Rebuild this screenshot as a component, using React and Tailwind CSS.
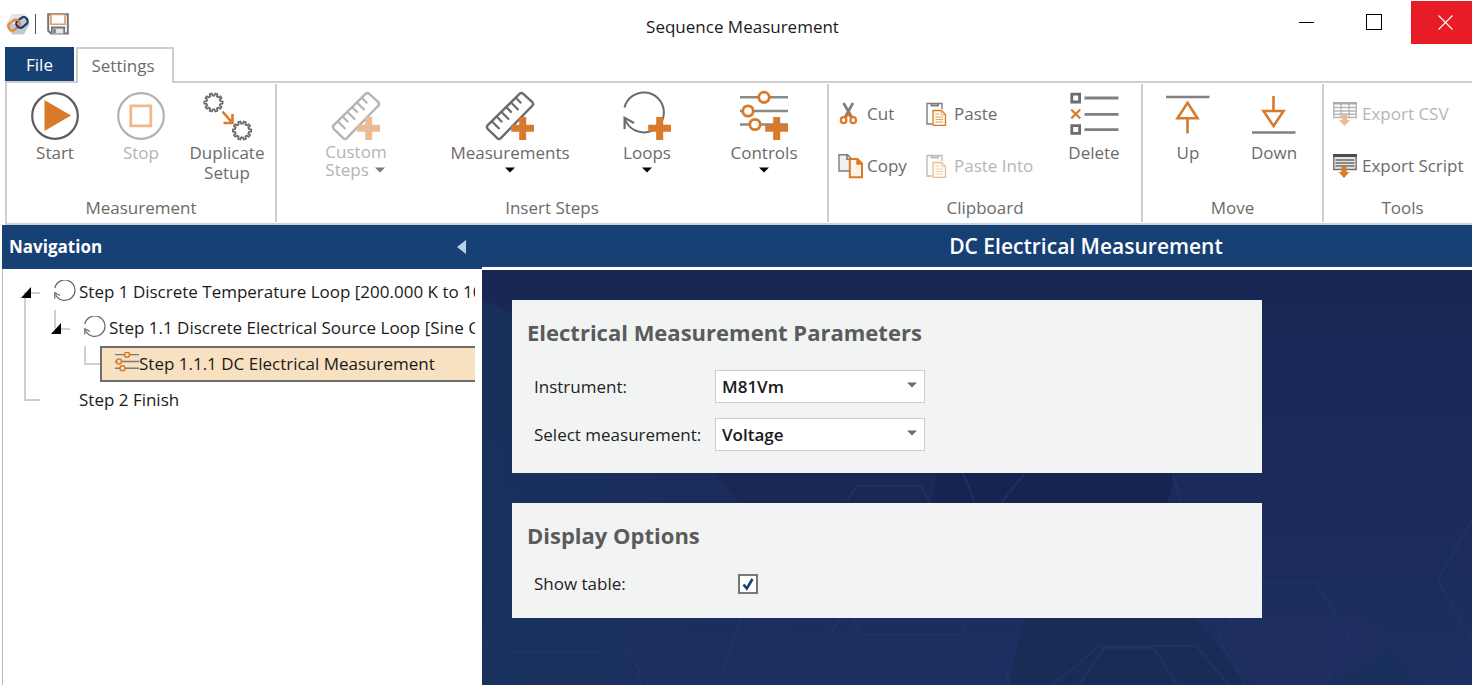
import { useState } from 'react';
import clsx from 'clsx';

const GRAY = '#6b6b6b';
const ORANGE = '#d97a2b';

function gearPath(cx, cy) {
  const teeth = 10;
  const points = [];
  for (let i = 0; i < teeth; i++) {
    [[-0.3, 7], [-0.2, 9.2], [0.2, 9.2], [0.3, 7]].forEach(([shift, r]) => {
      const a = ((i + shift) / teeth) * Math.PI * 2;
      points.push(`${(cx + r * Math.cos(a)).toFixed(1)} ${(cy + r * Math.sin(a)).toFixed(1)}`);
    });
  }
  return `M${points.join('L')}Z`;
}

function BigIcon({ children }) {
  return (
    <svg viewBox="0 0 48 48" fill="none" className="w-12 h-12 overflow-visible" aria-hidden="true">
      {children}
    </svg>
  );
}

function SmallIcon({ children }) {
  return (
    <svg viewBox="0 0 24 24" fill="none" className="w-6 h-6 shrink-0 overflow-visible" aria-hidden="true">
      {children}
    </svg>
  );
}

const Plus = () => <path d="M33.2 25h7v7.8H48v7h-7.8V48h-7v-8.2h-8v-7h8z" fill={ORANGE} />;

const StartIcon = () => (
  <BigIcon>
    <circle cx="24" cy="24" r="22.8" stroke="#5c5c5c" strokeWidth="2.2" />
    <path d="M13.5 8L40 23.5L13.5 39z" fill={ORANGE} />
  </BigIcon>
);

const StopIcon = () => (
  <BigIcon>
    <circle cx="24" cy="24" r="22.8" stroke="#b2b2b2" strokeWidth="2.2" />
    <path d="M13.8 13.8h20v20h-20z" stroke="#f0b98a" strokeWidth="2.8" />
  </BigIcon>
);

const DuplicateIcon = () => (
  <BigIcon>
    <path d={gearPath(10.5, 10.5)} stroke={GRAY} strokeWidth="1.8" strokeLinejoin="round" />
    <path d={gearPath(39, 38.5)} stroke={GRAY} strokeWidth="1.8" strokeLinejoin="round" />
    <path d="M19.5 19.5L29 30.5M29.5 22v9h-9" stroke={ORANGE} strokeWidth="2.6" />
  </BigIcon>
);

const RulerIcon = () => (
  <BigIcon>
    <path d="M33.5 1.8Q35.5 0 37.3 1.8L46.3 10.2Q48 12 46.3 13.8L14.8 46.2Q13 48 11.2 46.2L1.8 37Q0 35 1.8 33.2z" fill="#fff" stroke={GRAY} strokeWidth="2.4" />
    <path d="M6 29.5l7.5 7.5M10.8 24.8l5.4 5.4M15.5 20l7.5 7.5M20.3 15.2l5.4 5.4M25 10.5l7.5 7.5M29.8 5.8l5.4 5.4" stroke={GRAY} strokeWidth="2.2" />
    <Plus />
  </BigIcon>
);

const LoopIcon = () => (
  <BigIcon>
    <path d="M1.5 15.5A20 20 0 1 1 26 39.8A20.3 20.3 0 0 1 2 27.5" stroke={GRAY} strokeWidth="2" />
    <path d="M1.6 37V25.8L11 31" stroke={GRAY} strokeWidth="2.2" />
    <Plus />
  </BigIcon>
);

function Sliders() {
  return (
    <>
      <path d="M0 5.3h48M0 19h48M0 32.5h48" stroke="#8a8a8a" strokeWidth="2.6" />
      <g fill="#fff" stroke={ORANGE} strokeWidth="2.8">
        <circle cx="24" cy="5.3" r="5.2" />
        <circle cx="8" cy="19" r="5.2" />
        <circle cx="15" cy="32.5" r="5.2" />
      </g>
    </>
  );
}

const ControlsIcon = () => (
  <BigIcon>
    <Sliders />
    <Plus />
  </BigIcon>
);

const DeleteIcon = () => (
  <BigIcon>
    <path d="M1.8 2.2h7.8v7.8H1.8zM1.8 33.6h7.8v7.8H1.8z" stroke={GRAY} strokeWidth="2.8" />
    <path d="M1.2 17.5l9 9M10.2 17.5l-9 9" stroke={ORANGE} strokeWidth="2.2" />
    <path d="M14.5 6H48.5M14.5 22.4H48.5M14.5 37.7H48.5" stroke="#808080" strokeWidth="2.8" />
  </BigIcon>
);

const UpIcon = () => (
  <BigIcon>
    <path d="M2 5h43.5" stroke="#808080" strokeWidth="2.6" />
    <path d="M23.5 26.5V41.5M23.5 10.8L33.5 26.3H13.5z" stroke={ORANGE} strokeWidth="2.6" />
  </BigIcon>
);

const DownIcon = () => (
  <BigIcon>
    <path d="M2 40.5h43.5" stroke="#808080" strokeWidth="2.6" />
    <path d="M23.5 4V19M23.5 34L33.5 19H13.5z" stroke={ORANGE} strokeWidth="2.6" />
  </BigIcon>
);

const CutIcon = () => (
  <SmallIcon>
    <path d="M5.5 1L14 15.5M15 1L6.8 15.5" stroke="#7c7c7c" strokeWidth="2.6" />
    <g stroke={ORANGE} strokeWidth="2.2">
      <ellipse cx="5.6" cy="18.2" rx="2.8" ry="3" />
      <ellipse cx="15.2" cy="18.2" rx="2.8" ry="3" />
      <path d="M7.5 15.8L10.4 12.5L13.3 15.8" />
    </g>
  </SmallIcon>
);

const CopyIcon = () => (
  <SmallIcon>
    <path d="M1 .8h8.5l4 4V17H1z" fill="#f0f0f0" stroke="#7c7c7c" strokeWidth="1.4" />
    <path d="M9 .8v4.4h4.4" stroke="#7c7c7c" strokeWidth="1.6" />
    <path d="M11.8 5h7.7l4.5 4.5v13.7H11.8z" fill="#fdf3e6" stroke={ORANGE} strokeWidth="2" />
    <path d="M19 5v5h5" fill={ORANGE} stroke={ORANGE} strokeWidth="1.4" />
  </SmallIcon>
);

const PasteIcon = () => (
  <SmallIcon>
    <path d="M7 22H2V1.5h15V7" stroke="#7c7c7c" strokeWidth="1.4" />
    <path d="M6.5 1v2.5h6.5V1" stroke="#7c7c7c" strokeWidth="1.8" />
    <path d="M8 8.5h8.5l4 4v10.8H8z" fill="#fff8ee" stroke={ORANGE} strokeWidth="1.3" />
    <path d="M16.3 8.5v4.2h4M10.5 12h3.5M10.5 15h7.5M10.5 17.5h7.5M10.5 20h7.5" stroke="#e9a45c" strokeWidth="1" />
  </SmallIcon>
);

const ExportCsvIcon = () => (
  <SmallIcon>
    <path d="M.8 1h22.4v14.5H.8zM.8 5.5h22.4M.8 9h22.4M.8 12.3h22.4M8 1v14.5M16 1v14.5" stroke="#707070" strokeWidth="1.4" />
    <path d="M0 1.3h24" stroke="#555" strokeWidth="2.4" />
    <path d="M9 11h5v7h3l-5.5 6L6 18h3z" fill={ORANGE} />
  </SmallIcon>
);

const ExportScriptIcon = () => (
  <SmallIcon>
    <path d="M.8 1.5h22.4v14H.8z" fill="#e4e4e4" stroke="#707070" strokeWidth="1.4" />
    <path d="M0 1.5h24" stroke="#4d4d4d" strokeWidth="3" />
    <path d="M2.5 6h19M2.5 9h19M2.5 12h19" stroke="#6b6b6b" strokeWidth="1.4" />
    <path d="M8.5 12h5v6h3L11 24l-5.5-6h3z" fill={ORANGE} />
  </SmallIcon>
);

function Caret({ className }) {
  return (
    <svg viewBox="0 0 10 6" className={clsx('w-2.5 h-1.5 inline-block', className)} fill="currentColor" aria-hidden="true">
      <path d="M0 .5h10L5 5.5z" />
    </svg>
  );
}

function BigButton({ icon: Icon, label, width, disabled, menu }) {
  return (
    <button type="button" disabled={disabled} className={clsx('flex flex-col items-center pt-2', width)}>
      <span className={clsx(disabled && label !== 'Stop' && 'opacity-50')}>
        <Icon />
      </span>
      <span
        className={clsx(
          'mt-[3px] whitespace-pre-line',
          disabled ? 'text-[#b4b4b4] text-left' : 'text-center',
          menu === 'inline' ? 'leading-[18px]' : 'leading-5'
        )}
      >
        {label}
        {menu === 'inline' && <Caret className="ml-1.5 mb-0.5 text-[#777]" />}
      </span>
      {menu === 'below' && <Caret className="mt-1 text-black" />}
    </button>
  );
}

function SmallButton({ icon: Icon, label, disabled }) {
  return (
    <button
      type="button"
      disabled={disabled}
      className={clsx('flex items-center gap-[5px] h-[52px] text-left whitespace-nowrap', disabled && 'opacity-50')}
    >
      <Icon />
      {label}
    </button>
  );
}

function Group({ title, className, inner, children }) {
  return (
    <section className={clsx('flex flex-col mt-px mb-px border-[#cfcfcf]', className)}>
      <div className={clsx('flex flex-1', inner)}>{children}</div>
      <h2 className="text-center leading-7">{title}</h2>
    </section>
  );
}

function TitleBar() {
  return (
    <header className="flex items-start h-[47px]">
      <div className="flex items-center pl-1.5 pt-3 w-[214px]">
        <svg viewBox="0 0 24 24" className="w-6 h-6" fill="none" aria-hidden="true">
          <path d="M6 2.5h12L23.5 12L18 22.5H6L.5 12z" fill="#c4c7cb" />
          <path d="M6 2.5h12L12 12L.5 12z" fill="#e3e4e6" />
          <rect x="2" y="9.2" width="12" height="8" rx="3.4" transform="rotate(-38 8 13.2)" stroke="#de8a35" strokeWidth="2.2" />
          <rect x="10" y="6.4" width="12" height="8" rx="3.6" transform="rotate(-38 16 10.4)" stroke="#1d3a73" strokeWidth="2.2" />
          <path d="M9 8.2q3-1.2 4.6 1.6" stroke="#de8a35" strokeWidth="2.2" />
        </svg>
        <span className="w-px h-5 ml-[5px] bg-[#555]" />
        <button type="button" aria-label="Save" className="ml-[11px]">
          <svg viewBox="0 0 22 22" className="w-[22px] h-[22px]" fill="none" aria-hidden="true">
            <path d="M1.2 1.2h19.6v19.3H4.2L1.2 17.8z" fill="#fff" stroke="#747474" strokeWidth="2" />
            <path d="M4 1.5v9.7h14V1.5z" fill="#fff" stroke="#dc9a62" strokeWidth="1.6" />
            <path d="M4.8 20.5v-6h12.4v6" fill="#e6e6e6" stroke="#747474" strokeWidth="1.8" />
            <path d="M7.5 16v4" stroke="#747474" strokeWidth="2.4" />
          </svg>
        </button>
      </div>
      <h1 className="flex-1 text-center text-[#1a1a1a] leading-[54px]">Sequence Measurement</h1>
      <div className="flex h-11">
        <button type="button" aria-label="Minimize" className="w-[70px] flex items-center justify-center">
          <span className="w-[15px] h-px bg-black" />
        </button>
        <button type="button" aria-label="Maximize" className="w-[70px] pr-1 flex items-center justify-center">
          <span className="w-4 h-4 border border-black" />
        </button>
        <button type="button" aria-label="Close" className="w-[61px] mt-px bg-[#e81c27] flex items-center justify-center pl-2">
          <svg viewBox="0 0 15 15" className="w-[15px] h-[15px]" stroke="#fff" strokeWidth="1.1" aria-hidden="true">
            <path d="M.5 .5l14 14M14.5 .5l-14 14" />
          </svg>
        </button>
      </div>
    </header>
  );
}

function Ribbon() {
  return (
    <div className="pl-[5px]">
      <div className="flex h-[34px] gap-0.5">
        <button type="button" className="w-[69px] pt-0.5 bg-[#174175] text-white">File</button>
        <button type="button" className="w-[98px] h-9 pr-1 relative bg-white border-2 border-b-0 border-[#cfcfcf]">Settings</button>
      </div>
      <div className="flex h-36 border-t-2 border-l-2 border-b-2 border-[#cfcfcf] border-b-[#c5d3e2]">
        <Group title="Measurement" className="border-r-2" inner="pl-[5px] pr-[5px]">
          <BigButton icon={StartIcon} label="Start" width="w-[86px]" />
          <BigButton icon={StopIcon} label="Stop" width="w-[86px]" disabled />
          <BigButton icon={DuplicateIcon} label={'Duplicate\nSetup'} width="w-[86px]" />
        </Group>
        <Group title="Insert Steps" className="border-r-2" inner="pl-px pr-[7px]">
          <BigButton icon={RulerIcon} label={'Custom\nSteps'} width="w-[156px]" menu="inline" disabled />
          <BigButton icon={RulerIcon} label="Measurements" width="w-[152px]" menu="below" />
          <BigButton icon={LoopIcon} label="Loops" width="w-[122px]" menu="below" />
          <BigButton icon={ControlsIcon} label="Controls" width="w-[112px]" menu="below" />
        </Group>
        <Group title="Clipboard" className="border-r-2" inner="pl-[9px] pr-1">
          <div className="grid grid-cols-[87px_126px] content-start pt-1">
            <SmallButton icon={CutIcon} label="Cut" />
            <SmallButton icon={PasteIcon} label="Paste" />
            <SmallButton icon={CopyIcon} label="Copy" />
            <SmallButton icon={PasteIcon} label="Paste Into" disabled />
          </div>
          <BigButton icon={DeleteIcon} label="Delete" width="w-[86px]" />
        </Group>
        <Group title="Move" className="border-r-2" inner="pl-0.5 pr-[5px]">
          <BigButton icon={UpIcon} label="Up" width="w-[86px]" />
          <BigButton icon={DownIcon} label="Down" width="w-[86px]" />
        </Group>
        <Group title="Tools" className="flex-1 pl-[9px]">
          <div className="flex flex-col pt-1">
            <SmallButton icon={ExportCsvIcon} label="Export CSV" disabled />
            <SmallButton icon={ExportScriptIcon} label="Export Script" />
          </div>
        </Group>
      </div>
    </div>
  );
}

const connectors = {
  open: { line: 'M1 18V36M1 19h15', arrow: true },
  nested: { line: 'M1 0V18M1 19h15', arrow: true },
  pass: { line: 'M1 0V36' },
  end: { line: 'M1 0V18h15' },
  none: { line: '' },
};

function Connector({ type, narrow }) {
  const { line, arrow } = connectors[type];
  return (
    <svg width={narrow ? 16 : 30} height="36" className="shrink-0 overflow-visible" fill="none" aria-hidden="true">
      <path d={line} stroke="#cfcfcf" strokeWidth="2" />
      {arrow && <path d="M7 13V24H-3z" fill="#000" />}
    </svg>
  );
}

const LoopSmall = () => (
  <svg viewBox="0 0 22 22" className="w-[22px] h-[22px] mr-[3px] mb-0.5 shrink-0" fill="none" stroke="#666" strokeWidth="1.2" aria-hidden="true">
    <path d="M.8 8A10.2 10.2 0 1 1 1.5 14.5" />
    <path d="M.8 18.5V12.8L6 15.5" />
  </svg>
);

const steps = [
  { text: 'Step 1 Discrete Temperature Loop [200.000 K to 100.000 K]', lines: ['open'], loop: true },
  { text: 'Step 1.1 Discrete Electrical Source Loop [Sine Current]', lines: ['pass', 'nested'], loop: true },
  { text: 'Step 1.1.1 DC Electrical Measurement', lines: ['pass', 'none', 'end'], leaf: true },
  { text: 'Step 2 Finish', lines: ['end'] },
];

function Navigation() {
  const [selected, setSelected] = useState(2);

  return (
    <aside className="w-[480px] shrink-0 flex flex-col">
      <div className="flex items-center justify-between h-11 pl-[7px] pr-4 bg-[#174175] text-white">
        <h2 className="font-bold">Navigation</h2>
        <button type="button" aria-label="Collapse navigation">
          <svg viewBox="0 0 9 14" className="w-[9px] h-3.5" fill="#b9d0ea" aria-hidden="true">
            <path d="M9 0V14L0 7z" />
          </svg>
        </button>
      </div>
      <ul className="flex-1 pt-[5px] pl-[21px] mr-[7px] border-l border-[#bbb] text-[#1a1a1a] overflow-hidden">
        {steps.map((step, i) => (
          <li key={step.text} className="flex h-9">
            {step.lines.map((type, n) => (
              <Connector key={n} type={type} narrow={n === 2} />
            ))}
            <button
              type="button"
              onClick={() => setSelected(i)}
              className={clsx(
                'flex flex-1 items-center whitespace-nowrap overflow-hidden',
                selected === i && 'bg-[#f7e1c1] border-2 border-r-0 border-[#6f6f6f]',
                step.leaf && 'pl-[13px]',
                !step.loop && !step.leaf && 'pl-[25px]'
              )}
            >
              {step.loop && <LoopSmall />}
              {step.leaf && (
                <svg viewBox="0 0 48 40" className="w-6 h-5 mb-1 shrink-0" fill="none" aria-hidden="true">
                  <path d="M0 5.3h48M0 19h48M0 32.5h48" stroke="#7a7a7a" strokeWidth="2.6" />
                  <g fill="#f7e1c1" stroke={ORANGE} strokeWidth="3">
                    <circle cx="24" cy="5.3" r="5" />
                    <circle cx="8" cy="19" r="5" />
                    <circle cx="15" cy="32.5" r="5" />
                  </g>
                </svg>
              )}
              {step.text}
            </button>
          </li>
        ))}
      </ul>
    </aside>
  );
}

function Backdrop() {
  return (
    <svg viewBox="0 0 990 416" preserveAspectRatio="xMinYMin slice" className="absolute inset-0 w-full h-full" fill="none" aria-hidden="true">
      <defs>
        <linearGradient id="sky" x1="0" y1="0" x2="0" y2="1">
          <stop offset="0" stopColor="#182653" />
          <stop offset="0.5" stopColor="#1a2b5a" />
          <stop offset="1" stopColor="#1d2f60" />
        </linearGradient>
        <linearGradient id="side" x1="0" y1="0" x2="1" y2="0">
          <stop offset="0" stopColor="#18325c" stopOpacity="0.8" />
          <stop offset="1" stopColor="#18325c" stopOpacity="0" />
        </linearGradient>
      </defs>
      <path d="M0 0h990v416H0z" fill="url(#sky)" />
      <path d="M0 30L300 160L340 416H0z" fill="url(#side)" />
      <path d="M232 200h220l-8 40H262z" fill="#182853" />
      <path d="M455 200h238l-8 36H448z" fill="#162550" />
      <path d="M543 345h166l60 71H526z" fill="#192c56" />
      <path d="M740 345h140l30 30-80 41h-60z" fill="#1f2e61" />
      <path d="M845 416l64-34 30 34z" fill="#18305b" />
      <g stroke="#213368" strokeWidth="1.5">
        <path d="M365 230l10-14h64l10 20M480 200l14 36M545 200l-28 36M690 200l8 30" />
        <path d="M118 345l50 71M142 345l30 60h68l20-60M370 345l8 20h100l12-20M20 345L2 380M18 416l12-34h122l8 34" />
        <path d="M380 416l14-22h128l6 22M360 345l-44 71" />
        <path d="M568 416l24-18 24-22h98l34 40M596 416l26-38h50l24 38" />
        <path d="M780 312h54l34 56-26 48M752 345l-16 23 28 48" />
        <path d="M990 250l-34 60 34 60M970 416l8-20h12" />
      </g>
    </svg>
  );
}

function Card({ title, children }) {
  return (
    <section className="relative w-full max-w-[750px] bg-[#f2f4f4] pl-[15px] pt-4 pb-[22px]">
      <h3 className="text-[22px] leading-8 font-bold text-[#5b5b5b]">{title}</h3>
      <div className="pl-[7px]">{children}</div>
    </section>
  );
}

function SelectField({ id, label, options, value, onChange }) {
  return (
    <div className="flex items-center">
      <label htmlFor={id} className="w-[181px] text-[#222]">{label}</label>
      <div className="relative">
        <select
          id={id}
          value={value}
          onChange={(e) => onChange(e.target.value)}
          className="appearance-none block w-[210px] h-[33px] pl-1.5 pr-6 bg-white border border-[#cccccc] font-semibold text-[#1a1a1a]"
        >
          {options.map((option) => (
            <option key={option}>{option}</option>
          ))}
        </select>
        <Caret className="absolute right-2 top-3 text-[#6b6b6b] pointer-events-none" />
      </div>
    </div>
  );
}

function MeasurementPanel() {
  const [instrument, setInstrument] = useState('M81Vm');
  const [measurement, setMeasurement] = useState('Voltage');
  const [showTable, setShowTable] = useState(true);

  return (
    <main className="flex-1 flex flex-col">
      <h2 className="h-[42px] pl-[218px] bg-[#174175] text-white text-center text-[21px] leading-[42px] font-semibold">
        DC Electrical Measurement
      </h2>
      <div className="relative flex-1 mt-[3px] p-[30px] flex flex-col gap-[30px]">
        <Backdrop />
        <Card title="Electrical Measurement Parameters">
          <div className="flex flex-col gap-[15px] pt-[22px]">
            <SelectField id="instrument" label="Instrument:" options={['M81Vm']} value={instrument} onChange={setInstrument} />
            <SelectField
              id="measurement"
              label="Select measurement:"
              options={['Voltage', 'Current']}
              value={measurement}
              onChange={setMeasurement}
            />
          </div>
        </Card>
        <Card title="Display Options">
          <div className="flex items-center h-8 mt-[17px] -mb-1">
            <label htmlFor="show-table" className="w-[204px] text-[#222]">Show table:</label>
            <span className="relative">
              <input
                id="show-table"
                type="checkbox"
                checked={showTable}
                onChange={(e) => setShowTable(e.target.checked)}
                className="peer appearance-none block w-5 h-5 bg-white border-2 border-[#777]"
              />
              <svg viewBox="0 0 20 20" className="absolute inset-0 hidden peer-checked:block pointer-events-none" fill="none" aria-hidden="true">
                <path d="M5.5 10.5L8.8 14.5L14.5 5" stroke="#174175" strokeWidth="2.6" />
              </svg>
            </span>
          </div>
        </Card>
      </div>
    </main>
  );
}

export default function App() {
  return (
    <div className="min-h-screen flex flex-col bg-white text-[17px] text-[#6b6b6b] font-['Open_Sans','Noto_Sans',sans-serif] overflow-hidden">
      <TitleBar />
      <Ribbon />
      <div className="flex flex-1 pl-0.5">
        <Navigation />
        <MeasurementPanel />
      </div>
    </div>
  );
}
